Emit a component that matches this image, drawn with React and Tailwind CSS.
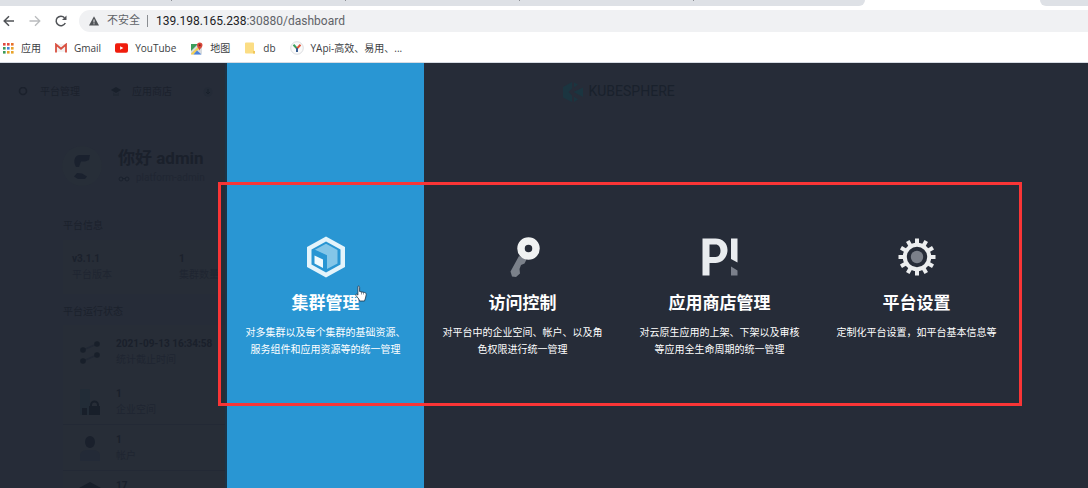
import React from "react";

const cjk = "font-['Roboto','Noto_Sans_CJK_SC',sans-serif]";

function ClusterIcon() {
  return (
    <svg viewBox="0 0 40 42" className="h-[42px] w-10" aria-hidden="true">
      <path d="M20 0.5 39 11v20L20 41.500 1 31V11z" fill="#e4f4fb" />
      <path d="M20 5.500 34.500 13.500v15L20 36.500 5.500 28.500v-15z" fill="#2996d3" />
      <path d="M20 7.800 31.500 14v13.500L20 33.500V19.500L8.500 14z" fill="#84c6e8" />
      <path d="M8 14.500 20 20v14.500" fill="none" stroke="#2996d3" strokeWidth="2" />
      <path d="M8.500 19.500 17 23.500v8.500L8.500 27.500z" fill="#f1fafd" />
    </svg>
  );
}

function KeyIcon() {
  return (
    <svg viewBox="0 0 40 42" className="h-[42px] w-10" aria-hidden="true">
      <path d="M16 20 7.500 35.500l1.500 5 4 .5 4-3.500-.5-4.500 1.500-4 3.500-1.500 2-4z" fill="#7b818a" />
      <circle cx="25.500" cy="12.500" r="7.500" fill="none" stroke="#f0f2f2" strokeWidth="7.500" />
    </svg>
  );
}

function StoreIcon() {
  return (
    <svg viewBox="0 0 40 42" className="h-[42px] w-10" aria-hidden="true">
      <path
        fillRule="evenodd"
        d="M2.500 2.500h13c7 0 12 4.500 12 11.500S22.500 27 15.500 27H9.500v12.500h-7zM9.500 8.500V21h6c3.200 0 5-2.500 5-6.200s-1.800-6.300-5-6.300z"
        fill="#e9ecef"
      />
      <path d="M31 2.500h6.500v24L31 23z" fill="#e9ecef" />
      <path d="M31 30.500l6.500 4v5H31z" fill="#7b808b" />
    </svg>
  );
}

const teeth = [0, 30, 60, 90, 120, 150, 180, 210, 240, 270, 300, 330];

function GearIcon() {
  return (
    <svg viewBox="0 0 40 42" className="h-[42px] w-10" aria-hidden="true">
      {teeth.map((a) => (
        <path key={a} d="M18 8V2.500h4V8z" transform={`rotate(${a} 20 21)`} fill="#eceeef" />
      ))}
      <circle cx="20" cy="21" r="12.200" fill="none" stroke="#eceeef" strokeWidth="4" />
      <circle cx="20" cy="21" r="6.200" fill="#7b808a" />
    </svg>
  );
}

const entries = [
  { title: "集群管理", text: "对多集群以及每个集群的基础资源、服务组件和应用资源等的统一管理", Icon: ClusterIcon, active: true },
  { title: "访问控制", text: "对平台中的企业空间、帐户、以及角色权限进行统一管理", Icon: KeyIcon },
  { title: "应用商店管理", text: "对云原生应用的上架、下架以及审核等应用全生命周期的统一管理", Icon: StoreIcon },
  { title: "平台设置", text: "定制化平台设置，如平台基本信息等", Icon: GearIcon },
];

function Entry({ title, text, Icon, active }) {
  return (
    <a
      href="#"
      className={
        "flex w-[197px] shrink-0 flex-col items-center pt-[173px] text-center text-white " +
        (active ? "bg-[#2996d3] shadow-[-2px_0_0_#1b3448]" : "")
      }
    >
      <Icon />
      <h2 className="mt-[13px] text-[17px] leading-6 font-bold">{title}</h2>
      <p className="mt-[9px] w-40 text-[10px] leading-[17px] break-all">{text}</p>
    </a>
  );
}

function Hand() {
  return (
    <svg viewBox="0 0 12 17" className="absolute top-[222px] left-[128px] h-[17px] w-3" aria-hidden="true">
      <path
        d="M3 1.300c.8-.5 1.600 0 1.600 1V6.500l5 1c1.200.3 1.700 1 1.600 2.200L10.500 13l-1 3H4.500L3.800 14 .8 10.300c-.5-.8.4-1.500 1.200-1l.9.800z"
        fill="#fff"
        stroke="#1c3246"
        strokeWidth=".8"
      />
      <path d="M6.500 7v2.500M8.500 7.500v2" stroke="#1c3246" strokeWidth=".5" />
    </svg>
  );
}

function TabStrip() {
  return (
    <div className="flex h-[6px] justify-between bg-white">
      <div className="flex w-[865px] justify-between rounded-br-lg bg-[#dee1e6] px-[171px]">
        <span className="h-px w-px bg-[#8d9095]" />
        <span className="h-px w-px bg-[#8d9095]" />
        <span className="h-px w-px bg-[#8d9095]" />
        <span className="h-px w-px bg-[#8d9095]" />
      </div>
      <div className="w-12 rounded-bl-lg bg-[#dee1e6]" />
    </div>
  );
}

function Toolbar() {
  return (
    <div className="flex h-[30px] items-center bg-white">
      <div className="flex w-[79px] items-center gap-[14px] pl-[3px]">
        <button aria-label="Back">
          <svg viewBox="0 0 12 12" className="h-3 w-3" fill="none" stroke="#505357" strokeWidth="1.500">
            <path d="M11 6H1.500M6 1.200 1.200 6 6 10.800" />
          </svg>
        </button>
        <button aria-label="Forward">
          <svg viewBox="0 0 12 12" className="h-3 w-3" fill="none" stroke="#babcbe" strokeWidth="1.300">
            <path d="M.5 6h10M6 1.200 10.800 6 6 10.800" />
          </svg>
        </button>
        <button aria-label="Reload">
          <svg viewBox="0 0 12 12" className="h-3 w-3" fill="none">
            <path d="M10.300 8A4.800 4.800 0 1 1 9.500 2.700" stroke="#505357" strokeWidth="1.500" />
            <path d="M11.500.5V5H7z" fill="#505357" />
          </svg>
        </button>
      </div>
      <div className="flex h-[22px] flex-1 items-center rounded-l-full bg-[#f0f1f3] pl-[10px] text-[12px] text-[#5f6368]">
        <svg viewBox="0 0 10 10" className="h-[10px] w-[10px]" aria-hidden="true">
          <path d="M5 .2 10 9.500H0z" fill="#505357" />
          <path d="M5 3.500v3M5 7.300v1" stroke="#f0f1f3" />
        </svg>
        <span className="ml-2 text-[11px]">不安全</span>
        <span className="mr-2 ml-[7px] h-3 w-px bg-[#8a8d91]" />
        <span>
          <span className="text-[#202124]">139.198.165.238</span>:30880/dashboard
        </span>
      </div>
    </div>
  );
}

const dots = [
  ["#e04a3f", 0, 0], ["#e04a3f", 4, 0], ["#e8702a", 8, 0],
  ["#3c9a57", 0, 4], ["#4285d8", 4, 4], ["#e8a32a", 8, 4],
  ["#3c9a57", 0, 8], ["#e8a32a", 4, 8], ["#e8a32a", 8, 8],
];

function Bookmark({ label, children }) {
  return (
    <a href="#" className="flex items-center gap-[7px]">
      {children}
      <span>{label}</span>
    </a>
  );
}

function Bookmarks() {
  return (
    <nav className="flex h-[27px] items-center gap-[14px] border-b border-[#d6dbe3] bg-white pb-[2px] pl-[3px] font-['Open_Sans','Noto_Sans_CJK_SC',sans-serif] text-[10px] text-[#3c4043]">
      <Bookmark label="应用">
        <svg viewBox="0 0 11 11" className="h-[11px] w-[11px]" aria-hidden="true">
          {dots.map(([c, x, y]) => (
            <rect key={x + "-" + y} x={x} y={y} width="2.600" height="2.600" fill={c} />
          ))}
        </svg>
      </Bookmark>
      <Bookmark label="Gmail">
        <svg viewBox="0 0 12 10" className="h-[10px] w-3" aria-hidden="true">
          <rect x="1" y="1" width="10" height="8" fill="#f3f1f1" />
          <path d="M1 9.500V1.500l5 4.300 5-4.300v8" fill="none" stroke="#d95040" strokeWidth="1.800" />
        </svg>
      </Bookmark>
      <Bookmark label="YouTube">
        <svg viewBox="0 0 14 10" className="h-[10px] w-[13px]" aria-hidden="true">
          <rect width="14" height="10" rx="2" fill="#f01c0c" />
          <path d="M5.500 3v4L9 5z" fill="#fff" />
        </svg>
      </Bookmark>
      <Bookmark label="地图">
        <svg viewBox="0 0 13 13" className="h-[13px] w-[13px]" aria-hidden="true">
          <rect x="1" y="2" width="11" height="10.500" rx="1" fill="#d8dce0" />
          <path d="M1 2h7L1 9z" fill="#3d9c5b" />
          <path d="M1 11.500 9 4l1.500 1.500-7 7H1z" fill="#f3cf57" />
          <path d="M3.500 12.500 7 8.500l4.500 4z" fill="#4a82dc" />
          <path d="M9.500 8.500C9 6.500 7 5.500 7 3.300a2.700 2.700 0 0 1 5.500 0c0 2.200-2.500 3.200-3 5.200z" fill="#d9473a" />
          <circle cx="9.700" cy="3.200" r="1" fill="#7b241c" />
        </svg>
      </Bookmark>
      <Bookmark label="db">
        <svg viewBox="0 0 12 12" className="h-3 w-3" aria-hidden="true">
          <path d="M1 1.500Q1 .5 2 .5h7q1 0 1 1v7l1 1v2H2q-1 0-1-1z" fill="#fbdd84" />
          <path d="M9 9h2v2.500H9z" fill="#f1c75b" />
        </svg>
      </Bookmark>
      <Bookmark label="YApi-高效、易用、...">
        <svg viewBox="0 0 14 14" className="h-[14px] w-[14px]" aria-hidden="true">
          <circle cx="7" cy="7" r="6.300" fill="#fafafa" stroke="#d4d6d9" strokeWidth=".8" />
          <path d="M3.500 3.800 7 7.500" stroke="#3ca05e" strokeWidth="2" />
          <path d="M10.500 3.800 7 7.500" stroke="#e0543a" strokeWidth="2" />
          <path d="M7 7v4" stroke="#3a5e92" strokeWidth="2" />
        </svg>
      </Bookmark>
    </nav>
  );
}

function StatusRow({ value, label, className, children }) {
  return (
    <div className={"flex items-center border-b border-[#232935] pl-4 " + className}>
      <div className="w-[37px]">{children}</div>
      <dl className="h-8 leading-4">
        <dt className="font-bold text-[#1a202b]">{value}</dt>
        {label && <dd className="text-[#1f2531]">{label}</dd>}
      </dl>
    </div>
  );
}

function Dashboard() {
  return (
    <div className="col-start-1 row-start-1 h-0 text-[10px] text-[#1b212c]">
      <div className="flex h-[57px] items-center">
        <div className="flex flex-1 items-center pl-[18px]">
          <svg viewBox="0 0 10 10" className="h-[10px] w-[10px]" aria-hidden="true">
            <circle cx="5" cy="4" r="3.500" fill="none" stroke="#1b212c" strokeWidth="1.600" />
          </svg>
          <span className="ml-3">平台管理</span>
          <svg viewBox="0 0 10 10" className="ml-[31px] h-[10px] w-[10px]" aria-hidden="true">
            <path d="M5 0l5 3-5 3-5-3z" fill="#19202b" />
            <path d="M2 5.500 5 7.500l3-2V9H2z" fill="#212833" />
          </svg>
          <span className="ml-[11px]">应用商店</span>
          <svg viewBox="0 0 10 10" className="ml-[31px] h-[10px] w-[10px]" aria-hidden="true">
            <circle cx="5" cy="5" r="4.500" fill="#232a36" />
            <path d="M5 2v5M3 5l2 2 2-2" stroke="#19202b" fill="none" />
          </svg>
        </div>
        <div className="flex flex-1 items-center gap-[6px] pl-[19px]">
          <svg viewBox="0 0 20 22" className="h-[22px] w-5" aria-hidden="true">
            <path d="M0 6 9 1v6.500L5.500 11 9 14.500V21L0 16.500z" fill="#1b3540" />
            <path d="M11 1.500l4 2-4 3zM11 15.500l4 3-4 2.500zM20 6.500v9.500L10.500 11z" fill="#1b3540" />
          </svg>
          <span className="font-['Liberation_Sans_Narrow','Roboto',sans-serif] text-[14px] text-[#19212c]">KUBESPHERE</span>
        </div>
      </div>
      <div className="flex gap-4 pt-[26px] pl-[62px]">
        <svg viewBox="0 0 40 40" className="h-10 w-10" aria-hidden="true">
          <circle cx="20" cy="20" r="20" fill="#272e38" />
          <path d="M14 21c-3-5-2-12 4-12h10l-1 5-4 1.500h-4l-2 5.500zM15 27l5 .5 5 3-2 2.500h-7l-4-2.500z" fill="#1a212e" />
        </svg>
        <div>
          <h1 className="text-[17px] leading-6 font-bold text-[#1a202b]">你好 admin</h1>
          <p className="flex items-center gap-[6px] leading-4 text-[#202632]">
            <svg viewBox="0 0 12 8" className="h-2 w-3" fill="none" stroke="#1a212d" aria-hidden="true">
              <circle cx="3" cy="5" r="2" />
              <circle cx="9" cy="5" r="2" />
              <path d="M4.500 4.500h3" />
            </svg>
            platform-admin
          </p>
        </div>
      </div>
      <section className="ml-[63px] w-[300px] pt-[30px]">
        <h3 className="leading-5">平台信息</h3>
        <div className="mt-1 flex h-[54px] items-center bg-[#272d37] pl-[9px] leading-4">
          <dl className="w-[107px]">
            <dt className="font-bold">v3.1.1</dt>
            <dd className="text-[#1f2531]">平台版本</dd>
          </dl>
          <dl>
            <dt className="font-bold">1</dt>
            <dd className="text-[#1f2531]">集群数量</dd>
          </dl>
        </div>
        <h3 className="mt-2 leading-5">平台运行状态</h3>
        <div className="mt-[3px] bg-[#272d37]">
          <StatusRow value="2021-09-13 16:34:58" label="统计截止时间" className="h-[54px] border-transparent">
            <svg viewBox="0 0 22 24" className="h-6 w-[22px]" aria-hidden="true">
              <path d="M18 4 4 10M18 15 4 21" stroke="#212834" strokeWidth="1.500" />
              <g fill="#181f2a">
                <circle cx="18" cy="4" r="2.800" />
                <circle cx="4" cy="10" r="2.800" />
                <circle cx="18" cy="15" r="2.800" />
                <circle cx="4" cy="21" r="2.800" />
              </g>
            </svg>
          </StatusRow>
          <StatusRow value="1" label="企业空间" className="h-[46px]">
            <svg viewBox="0 0 22 28" className="h-7 w-[22px]" aria-hidden="true">
              <rect x="1" y="1" width="10" height="26" rx="2" fill="#222c37" />
              <path d="M3 20h5v7H3zM10 18h11v9H10z" fill="#181f2a" />
              <path d="M12 19v-2a3.500 3.500 0 0 1 7 0v2" stroke="#181f2a" strokeWidth="2" fill="none" />
            </svg>
          </StatusRow>
          <StatusRow value="1" label="帐户" className="h-[46px]">
            <svg viewBox="0 0 22 28" className="h-7 w-[22px]" aria-hidden="true">
              <ellipse cx="11" cy="8" rx="5" ry="6" fill="#1a202c" />
              <path d="M1 27v-5q0-5 6-6h8q6 1 6 6v5z" fill="#232a37" />
            </svg>
          </StatusRow>
          <StatusRow value="17" className="h-[46px]">
            <svg viewBox="0 0 22 24" className="h-6 w-[22px]" aria-hidden="true">
              <path d="M11 0 22 6 11 12 0 6z" fill="#181f2a" />
              <path d="M1 10l10 6 10-6v6l-10 6-10-6z" fill="#212834" />
            </svg>
          </StatusRow>
        </div>
      </section>
    </div>
  );
}

export default function App() {
  return (
    <div className={"flex h-screen flex-col overflow-hidden " + cjk}>
      <header className="shrink-0">
        <TabStrip />
        <Toolbar />
        <Bookmarks />
      </header>
      <main className="grid min-h-0 flex-1 grid-cols-1 grid-rows-1 overflow-hidden bg-[#262c38]">
        <Dashboard />
        <nav className="relative z-10 col-start-1 row-start-1 ml-[227px] flex w-fit">
          {entries.map((e) => (
            <Entry key={e.title} {...e} />
          ))}
          <Hand />
          <div className="pointer-events-none absolute top-[119px] -right-[7px] -left-[9px] h-56 border-3 border-[#f93536]" />
        </nav>
      </main>
    </div>
  );
}
